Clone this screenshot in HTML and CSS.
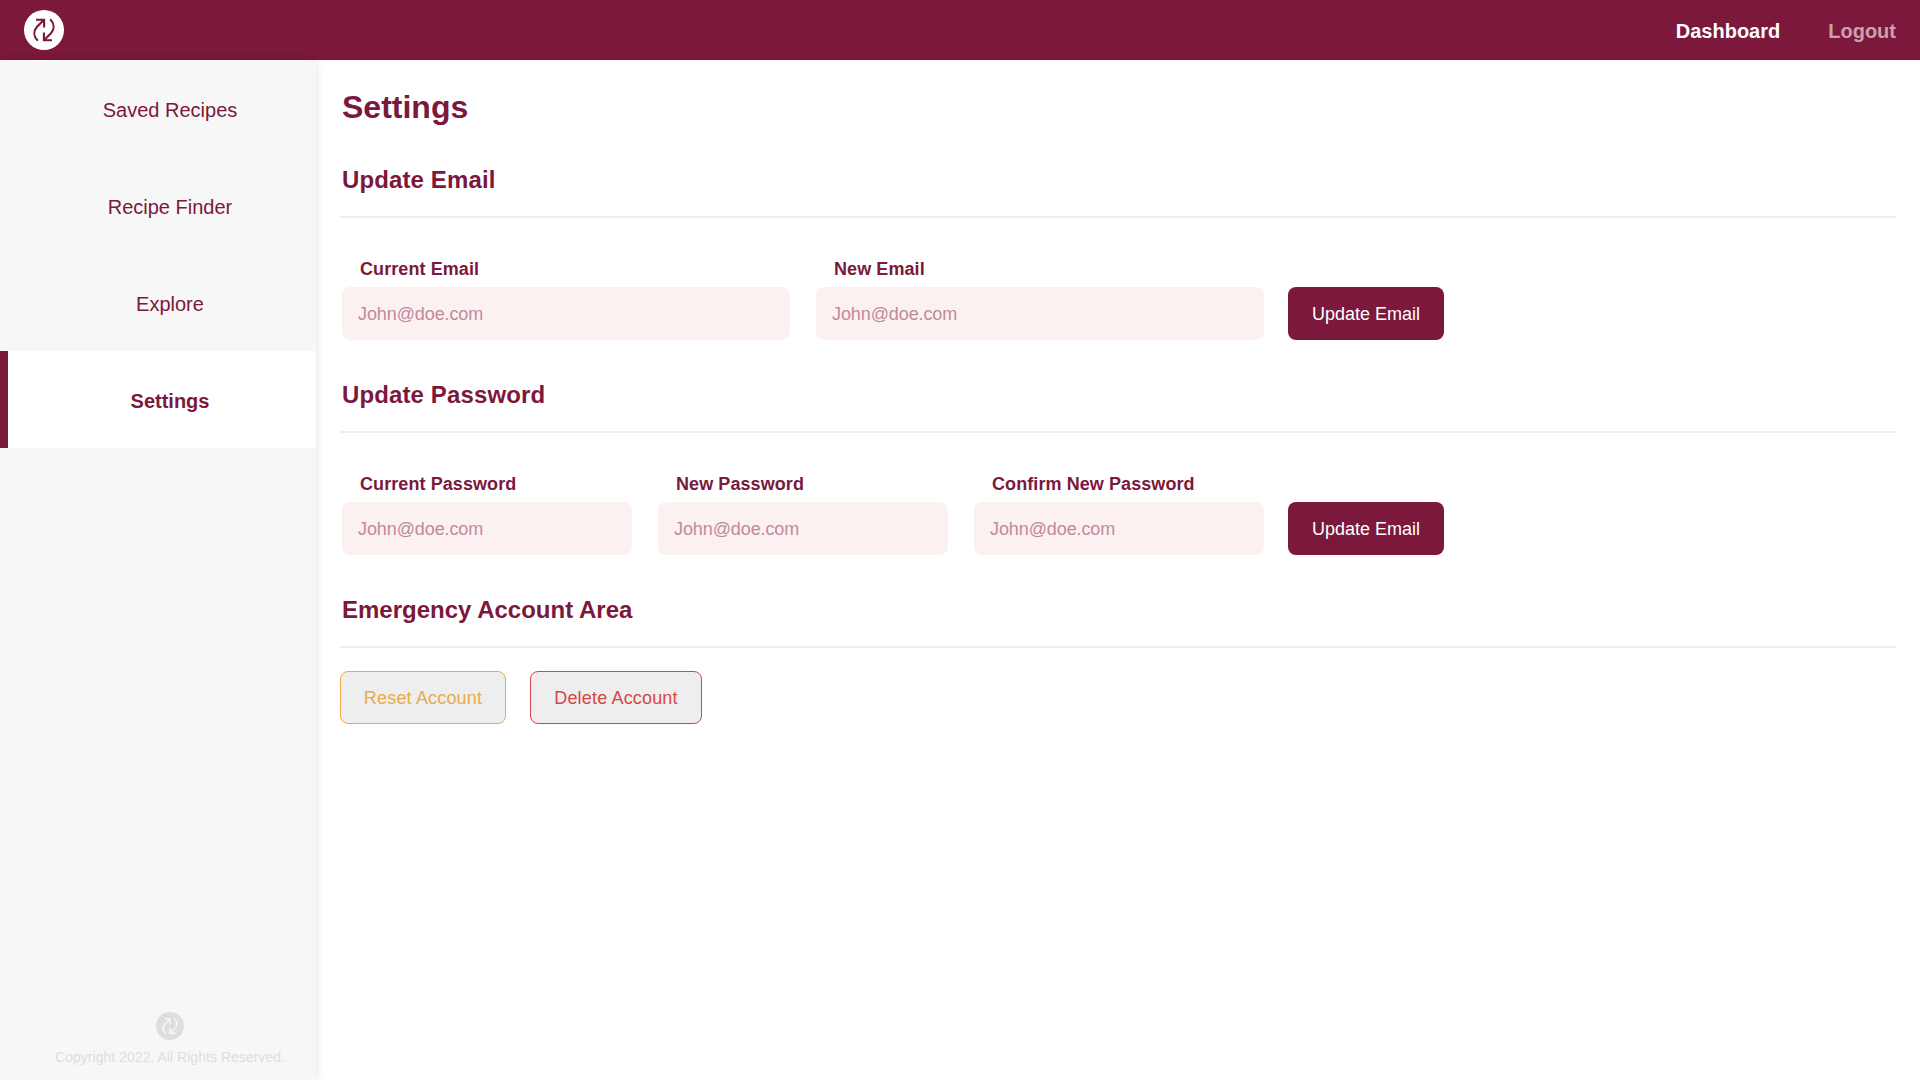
FILE: index.html
```
<!DOCTYPE html>
<html lang="en">
<head>
  <meta charset="utf-8">
  <title>Settings</title>
  <link rel="stylesheet" href="styles.css">
</head>
<body>
  <header class="topbar">
    <svg class="logo" viewBox="0 0 40 40">
      <circle class="logo-disc" cx="20" cy="20" r="20"/>
      <g class="logo-arrows">
        <path d="M13.8 30.8C9.4 26.4 9.4 21 12.8 17L19.8 10M12 9.7H20.1V17.6"/>
        <path d="M26.2 9.2C30.6 13.6 30.6 19 27.2 23L20.2 30M28 30.3H19.9V22.4"/>
      </g>
    </svg>
    <nav class="topnav">
      <a class="topnav-link topnav-current">Dashboard</a>
      <a class="topnav-link">Logout</a>
    </nav>
  </header>
  <div class="layout">
    <aside class="sidebar">
      <nav class="menu">
        <a class="menu-item">Saved Recipes</a>
        <a class="menu-item">Recipe Finder</a>
        <a class="menu-item">Explore</a>
        <a class="menu-item menu-active">Settings</a>
      </nav>
      <footer class="footer">
        <svg class="footer-logo" viewBox="0 0 40 40">
          <circle class="logo-disc" cx="20" cy="20" r="20"/>
          <g class="logo-arrows">
            <path d="M13.8 30.8C9.4 26.4 9.4 21 12.8 17L19.8 10M12 9.7H20.1V17.6"/>
            <path d="M26.2 9.2C30.6 13.6 30.6 19 27.2 23L20.2 30M28 30.3H19.9V22.4"/>
          </g>
        </svg>
        <p class="copyright">Copyright 2022. All Rights Reserved.</p>
      </footer>
    </aside>
    <main class="content">
      <h1 class="title">Settings</h1>
      <section class="section">
        <h2 class="heading heading-update">Update Email</h2>
        <form class="form">
          <div class="fields">
            <label class="field">Current Email<input class="input" type="email" placeholder="John@doe.com"></label>
            <label class="field">New Email<input class="input" type="email" placeholder="John@doe.com"></label>
          </div>
          <button class="button button-primary" type="button">Update Email</button>
        </form>
      </section>
      <section class="section">
        <h2 class="heading heading-update">Update Password</h2>
        <form class="form">
          <div class="fields">
            <label class="field">Current Password<input class="input" type="password" placeholder="John@doe.com"></label>
            <label class="field">New Password<input class="input" type="password" placeholder="John@doe.com"></label>
            <label class="field">Confirm New Password<input class="input" type="password" placeholder="John@doe.com"></label>
          </div>
          <button class="button button-primary" type="button">Update Email</button>
        </form>
      </section>
      <section class="section">
        <h2 class="heading">Emergency Account Area</h2>
        <div class="actions">
          <button class="button button-reset" type="button">Reset Account</button>
          <button class="button button-delete" type="button">Delete Account</button>
        </div>
      </section>
    </main>
  </div>
</body>
</html>
```
FILE: styles.css
```
* {
  box-sizing: border-box;
}

body {
  margin: 0;
  height: 100vh;
  display: flex;
  flex-direction: column;
  overflow: hidden;
  background: #fff;
  color: #7b183b;
  font-family: "Liberation Sans", Helvetica, Arial, sans-serif;
}

.topbar {
  height: 60px;
  flex: none;
  padding: 0 24px;
  display: flex;
  align-items: center;
  justify-content: space-between;
  background: #7b183b;
}

.logo {
  width: 40px;
  height: 40px;
}

.logo-disc {
  fill: #fff;
}

.logo-arrows {
  fill: none;
  stroke: #7b183b;
  stroke-width: 2.1;
}

.topnav {
  display: flex;
  gap: 48px;
  padding-top: 2px;
}

.topnav-link {
  font-size: 20px;
  font-weight: bold;
  color: rgba(255, 255, 255, 0.6);
}

.topnav-current {
  color: #fff;
}

.layout {
  flex: 1;
  display: flex;
}

.sidebar {
  width: 316px;
  flex: none;
  display: flex;
  flex-direction: column;
  justify-content: space-between;
  background: #f7f7f7;
  box-shadow: 0 0 8px rgba(0, 0, 0, 0.13);
}

.menu-item {
  display: block;
  height: 97px;
  padding: 3px 0 0 24px;
  line-height: 95px;
  font-size: 20px;
  text-align: center;
}

.menu-active {
  padding-left: 16px;
  border-left: 8px solid #7b183b;
  background: #fff;
  font-weight: bold;
}

.footer {
  padding: 0 0 14px 24px;
  display: flex;
  flex-direction: column;
  align-items: center;
  gap: 8px;
}

.footer-logo {
  width: 28px;
  height: 28px;
}

.footer-logo .logo-disc {
  fill: #dedede;
}

.footer-logo .logo-arrows {
  stroke: #f7f7f7;
}

.copyright {
  margin: 0;
  font-size: 14px;
  line-height: 18px;
  letter-spacing: 0.03px;
  color: #dedede;
}

.content {
  flex: 1;
  padding: 27px 24px 0;
}

.title {
  margin: 0 0 39px 2px;
  font-size: 32px;
  line-height: 40px;
}

.section {
  margin-bottom: 41px;
}

.heading {
  margin: 0;
  padding: 0 0 22px 2px;
  border-bottom: 2px solid #eee;
  font-size: 24px;
  line-height: 28px;
}

.heading-update {
  letter-spacing: 0.12px;
}

.form {
  display: flex;
  align-items: flex-end;
  gap: 24px;
  padding: 40px 0 0 2px;
}

.fields {
  display: flex;
  gap: 26px;
  width: 922px;
}

.field {
  flex: 1;
  min-width: 0;
  font-size: 18px;
  font-weight: bold;
  line-height: 22px;
  letter-spacing: 0.08px;
  text-indent: 18px;
}

.input {
  display: block;
  width: 100%;
  height: 53px;
  margin-top: 7px;
  padding: 1px 16px 0;
  border: 0;
  border-radius: 8px;
  background: #fcf1f1;
  font: 18px "Liberation Sans", Helvetica, Arial, sans-serif;
  letter-spacing: -0.1px;
}

.input::placeholder {
  color: #c08a9c;
}

.button {
  height: 53px;
  padding: 1px 0 0;
  border: 0;
  border-radius: 8px;
  font: 18px "Liberation Sans", Helvetica, Arial, sans-serif;
}

.button-primary {
  width: 156px;
  background: #7b183b;
  color: #fff;
}

.actions {
  display: flex;
  gap: 24px;
  padding-top: 23px;
}

.button-reset,
.button-delete {
  background: #eee;
  letter-spacing: 0.17px;
}

.button-reset {
  width: 166px;
  border: 1px solid #e9ab4c;
  color: #e9ab4c;
}

.button-delete {
  width: 172px;
  border: 1px solid #d34747;
  color: #d34747;
}
```
